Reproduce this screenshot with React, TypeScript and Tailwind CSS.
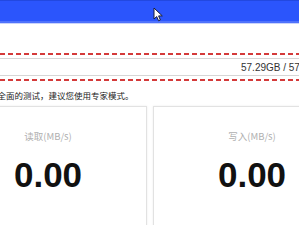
import React from "react";

const Dash = () => (
  <div className="h-[2px] w-full bg-[repeating-linear-gradient(90deg,#d43a3a_0px,#d43a3a_5px,transparent_5px,transparent_8px)]" />
);

export default function App() {
  return (
    <div className="relative w-[299px] h-[225px] overflow-hidden bg-white font-['Liberation_Sans','Noto_Sans_CJK_SC',sans-serif]">
      <div className="h-[1px] bg-[#2248e0]" />
      <div className="h-[20px] bg-[#2b55fc]" />
      <div className="h-[2px] bg-[#4f72fb]" />
      <div className="h-[1px] bg-[#c9d3fb]" />
      <div className="h-[29px]" />
      <Dash />
      <div className="h-[3px]" />
      <div className="h-[18px] border-y border-[#d6d6d6] flex items-center overflow-hidden whitespace-nowrap pl-[241px] text-[10px] text-[#333]">
        57.29GB / 57.30GB
      </div>
      <div className="h-[3px]" />
      <Dash />
      <div className="mt-[9px] ml-[-11px] whitespace-nowrap text-[8.5px] leading-[10px] text-[#222] font-['Noto_Sans_CJK_SC',sans-serif]">
        更全面的测试，建议您使用专家模式。
      </div>
      <div className="mt-[6px] flex gap-[6px] ml-[-51px]">
        <div className="w-[198px] h-[122px] shrink-0 border border-[#e2e2e2] shadow-[0_0_2px_rgba(0,0,0,0.08)] flex flex-col items-center pt-[23px]">
          <div className="text-[9.5px] leading-[12px] text-[#b0b0b0] font-['Noto_Sans_CJK_SC',sans-serif]">读取(MB/s)</div>
          <div className="mt-[15px] text-[35px] leading-[35px] font-bold text-[#111]">0.00</div>
        </div>
        <div className="w-[198px] h-[122px] shrink-0 border border-[#e2e2e2] shadow-[0_0_2px_rgba(0,0,0,0.08)] flex flex-col items-center pt-[23px]">
          <div className="text-[9.5px] leading-[12px] text-[#b0b0b0] font-['Noto_Sans_CJK_SC',sans-serif]">写入(MB/s)</div>
          <div className="mt-[15px] text-[35px] leading-[35px] font-bold text-[#111]">0.00</div>
        </div>
      </div>
      <svg className="absolute left-[153px] top-[7px]" width="11" height="15" viewBox="0 0 11 15">
        <path d="M1 1 L1 12 L3.7 9.6 L5.6 13.8 L7.4 13 L5.6 8.9 L9.3 8.9 Z" fill="#fff" stroke="#1a1f3a" strokeWidth="1" strokeLinejoin="round" />
      </svg>
    </div>
  );
}
